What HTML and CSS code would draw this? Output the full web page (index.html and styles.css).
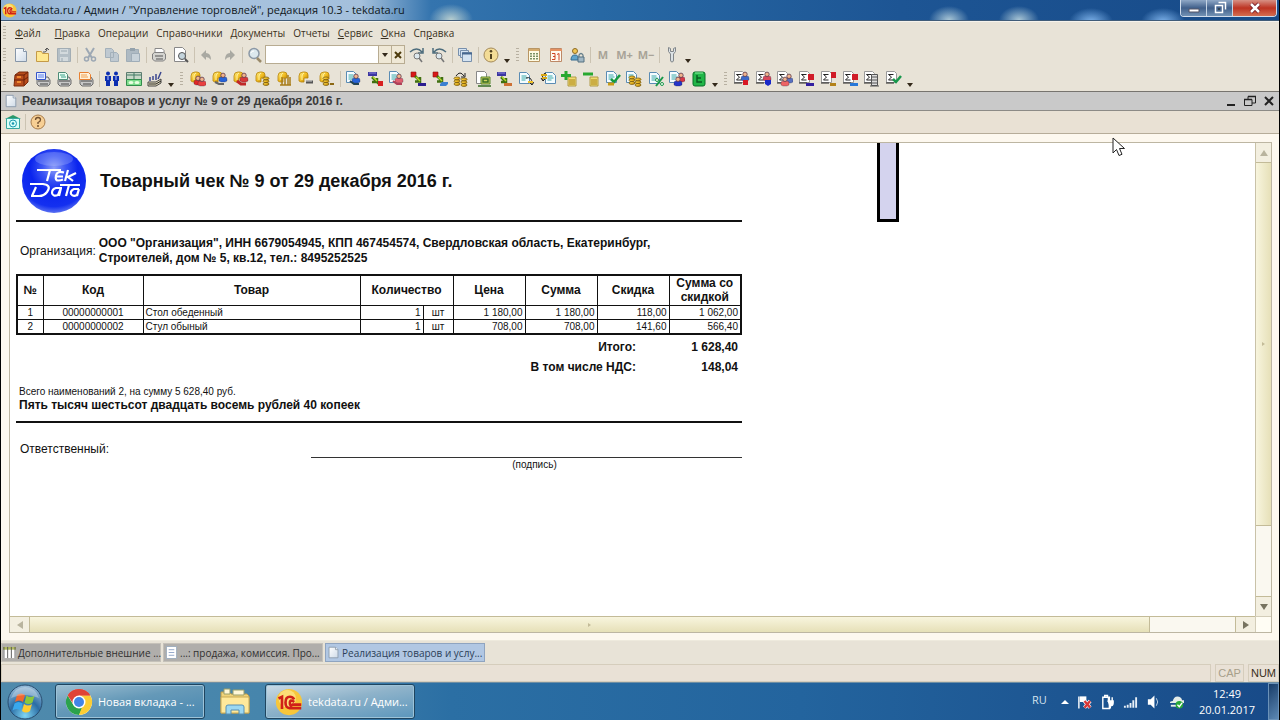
FILE: index.html
```html
<!DOCTYPE html>
<html lang="ru">
<head>
<meta charset="utf-8">
<title>Реализация товаров и услуг № 9</title>
<link rel="stylesheet" href="styles.css">
</head>
<body>
<svg class="sprite" aria-hidden="true">
  <defs>
    <linearGradient id="gold" x2="1" y2="1"><stop offset="0" stop-color="#fff08a"/><stop offset=".5" stop-color="#f2bd22"/><stop offset="1" stop-color="#a87408"/></linearGradient>
    <linearGradient id="paper" x2="1" y2="1"><stop offset="0" stop-color="#fff"/><stop offset="1" stop-color="#cfdbe8"/></linearGradient>
    <radialGradient id="ball" cx=".5" cy=".3" r=".75"><stop offset="0" stop-color="#8c9cf8"/><stop offset=".25" stop-color="#3a54f4"/><stop offset=".5" stop-color="#0a24ee"/><stop offset=".8" stop-color="#1430f0"/><stop offset="1" stop-color="#7e92f2"/></radialGradient>
    <radialGradient id="orb" cx=".5" cy=".9" r=".9"><stop offset="0" stop-color="#7fd6f4"/><stop offset=".5" stop-color="#2a6ca4"/><stop offset="1" stop-color="#9cc0dc"/></radialGradient>
    <g id="man"><path d="M0 8V6q0-2 2-2h4q2 0 2 2v2L6 9H2z" fill="currentColor" stroke="#223" stroke-opacity=".45" stroke-width=".6"/><circle cx="4" cy="2.3" r="2.2" fill="#f2b48c" stroke="#5a3a50" stroke-width=".8"/></g>
    <g id="coins"><g fill="url(#gold)" stroke="#7a5a08" stroke-width=".8"><ellipse cx="4" cy="8" rx="3" ry="1.400"/><ellipse cx="4" cy="5.2" rx="3" ry="1.400"/><ellipse cx="4" cy="2.4" rx="3" ry="1.400"/></g></g>
    <g id="page"><path d="M.5.5h7l3 3v8h-10z" fill="#f5fcff" stroke="#5a8cb4"/><path d="M2.500 4h5M2.500 6h6M2.500 8h4" stroke="#38a8a8"/></g>
    <g id="purse"><path d="M1 10V5q0-4 4-4h2q3 0 3 3v3H6v4H3z" fill="url(#gold)" stroke="#b88408" stroke-width=".8"/><path d="M4 9V5q0-2 2-3" fill="none" stroke="#fff5a8"/></g>
    <g id="printer"><path d="M2 9l2-3h9l2 3v4l-2 2H4l-2-2z" fill="#c8c8c8" stroke="#6c6c6c"/><path d="M3 10h11M5 13h8" stroke="#444"/><path d="M4 8h9" stroke="#fff"/></g>
    <g id="sum"><path d="M.5.5h8l2 2v9H.5z" fill="#fff" stroke="#999"/><path d="M7.500 3.500H2.500l3 2.500-3 3h5M0 12h8" fill="none" stroke="#222"/></g>
    <g id="flow"><path d="M1 1h9v4H1z" fill="#3c36a0"/><path d="M2 2h7" stroke="#8a86e0"/><path d="M5 6l5 5V7M10 11H5" fill="none" stroke="#407010" stroke-width="2.500"/><path d="M6 6l4 4" stroke="#b4dc28" stroke-width="1.500"/></g>
    <g id="route"><path d="M1 1h5v5H1z" fill="#d81818" stroke="#901010" stroke-width=".6"/><path d="M5 5l5 5V6M10 10.500H5" stroke="#407010" stroke-width="2.500" fill="none"/><path d="M6 6l4 4" stroke="#b4dc28" stroke-width="1.500"/></g>
  </defs>
  <symbol id="one" viewBox="0 0 16 16"><circle cx="8" cy="8" r="7.500" fill="#f7c63a"/><circle cx="7" cy="6" r="5" fill="#fff0a0" opacity=".6"/><path d="M2 6l2-1v7M11 6.500q-1-1.500-2.500-1.500Q6 5 6 8.300T8.500 11.500H15M11 8q-2.500-2-2.500.500T10 9.500h5" fill="none" stroke="#d02018" stroke-width="1.500"/></symbol>
  <symbol id="new" viewBox="0 0 16 16"><path d="M2.500 1.500h8l3 3v10h-11z" fill="url(#paper)" stroke="#8696a8"/><path d="M10.500 1.500v3h3" fill="#fff" stroke="#8696a8"/></symbol>
  <symbol id="open" viewBox="0 0 16 16"><path d="M1.500 4.500h5l1 2h6v8h-12z" fill="#ffe890" stroke="#c49a48"/><path d="M8 5h2q2 0 2-4M10 3l2-2 2 2" fill="none" stroke="#555"/></symbol>
  <symbol id="save" viewBox="0 0 16 16"><path d="M1.500 1.500h13v13h-13z" fill="#b4bfc6" stroke="#a2adb4"/><path d="M4 2h8v5H4zM4 10h8v4H4z" fill="#d3dadd"/><path d="M5 4h6M6 11v3" stroke="#9aa8b0"/></symbol>
  <symbol id="cut" viewBox="0 0 16 16"><path d="M4 1l6 10M12 1L6 11" stroke="#9da8b4" stroke-width="2"/><circle cx="4.500" cy="12" r="2" fill="none" stroke="#9da8b4" stroke-width="1.500"/><circle cx="11.500" cy="12" r="2" fill="none" stroke="#9da8b4" stroke-width="1.500"/></symbol>
  <symbol id="copy" viewBox="0 0 16 16"><path d="M1.500 1.500h6l2 2v7h-8zM6.500 5.500h6l2 2v7h-8z" fill="#bfc9d1" stroke="#a3b0ba"/></symbol>
  <symbol id="paste" viewBox="0 0 16 16"><path d="M1.500 2.500h12v12h-12z" fill="#aebac3" stroke="#a0adb6"/><path d="M5 1h5v3H5z" fill="#94a2ac"/><path d="M6.500 6.500h8v8h-8z" fill="#c8d2d9" stroke="#9fadb8"/></symbol>
  <symbol id="print" viewBox="0 0 16 16"><path d="M4 7V1.500h7l2 2V7" fill="#fff" stroke="#888"/><path d="M1.500 7l2-1.500h9l2 1.500v5l-2 2h-9l-2-2z" fill="#d4d4d0" stroke="#808080"/><path d="M4 9h8M5 12h7" stroke="#555"/></symbol>
  <symbol id="preview" viewBox="0 0 16 16"><path d="M1.500.500h8l3 3v11h-11z" fill="#fff" stroke="#888"/><circle cx="9" cy="9" r="3.500" fill="#c4d4dc" stroke="#555"/><path d="M12 12l3 3" stroke="#555" stroke-width="2"/></symbol>
  <symbol id="undo" viewBox="0 0 16 16"><path d="M7 3v3q5 0 5 7-2-3-5-3v3L2 8z" fill="#a9a9a2"/></symbol>
  <symbol id="redo" viewBox="0 0 16 16"><path d="M9 3v3q-5 0-5 7 2-3 5-3v3l5-5z" fill="#a9a9a2"/></symbol>
  <symbol id="find" viewBox="0 0 16 16"><circle cx="7" cy="6.500" r="5" fill="#dce8ee" stroke="#8b98a6" stroke-width="1.500"/><path d="M10 11l4 4" stroke="#9a8a6a" stroke-width="2.500"/><path d="M4 6q0-2 3-2" stroke="#fff" fill="none"/></symbol>
  <symbol id="findnext" viewBox="0 0 16 16"><path d="M1 5q7-6 12 0M14 1v5H9" fill="none" stroke="#4c6c7c" stroke-width="1.500"/><circle cx="8" cy="9" r="3" fill="#dce8ee" stroke="#777"/><path d="M10 11l3 4" stroke="#777" stroke-width="1.500"/></symbol>
  <symbol id="findprev" viewBox="0 0 16 16"><path d="M15 5q-7-6-12 0M2 1v5h5" fill="none" stroke="#4c6c7c" stroke-width="1.500"/><circle cx="8" cy="9" r="3" fill="#dce8ee" stroke="#777"/><path d="M10 11l3 4" stroke="#777" stroke-width="1.500"/></symbol>
  <symbol id="windows" viewBox="0 0 16 16"><g fill="#d5e4f2" stroke="#7890ac"><path d="M1.500 1.500h8v7h-8z"/><path d="M3.500 3.500h8v7h-8z"/><path d="M5.500 5.500h9v9h-9z"/></g><path d="M5 6.500h10" stroke="#466890" stroke-width="2"/></symbol>
  <symbol id="info" viewBox="0 0 16 16"><circle cx="8" cy="8" r="7" fill="#f3dc96" stroke="#a48a5a"/><path d="M8 7v5" stroke="#50411f" stroke-width="2"/><circle cx="8" cy="4.300" r="1.300" fill="#50411f"/></symbol>
  <symbol id="calc" viewBox="0 0 16 16"><path d="M2.500 1.500h11v13h-11z" fill="#fffbe4" stroke="#b89664"/><path d="M3 3h10" stroke="#d4aa6c" stroke-width="2"/><path d="M5 6v7M8 6v7M11 6v7" stroke="#50703c" stroke-width="1.500" stroke-dasharray="1.500 1"/></symbol>
  <symbol id="calendar" viewBox="0 0 16 16"><path d="M2.500 1.500h11v13h-11z" fill="#fffaf0" stroke="#bd8866"/><path d="M2 3h12" stroke="#e59162" stroke-width="2"/><path d="M4 6.500h3v6H4M5 9.500h2M9 7.500l2-1v7" fill="none" stroke="#cf4524"/></symbol>
  <symbol id="userlock" viewBox="0 0 16 16"><circle cx="6" cy="4" r="2.500" fill="#f1c653" stroke="#8c6a25"/><path d="M2 13q0-5 4-5t3 5z" fill="#62a5cc" stroke="#326b90"/><path d="M10 10V8q2-3 4 0v2" fill="none" stroke="#68808c" stroke-width="1.300"/><path d="M9 10h6v5H9z" fill="#a1b7c4" stroke="#547080"/></symbol>
  <symbol id="wrench" viewBox="0 0 16 16"><path d="M4.500.500v4l2 2.500v6q0 2 1.500 2t1.500-2V7l2-2.500v-4l-2 1v3h-3v-3z" fill="#dce2e5" stroke="#81868a"/></symbol>
  <symbol id="books" viewBox="0 0 16 16"><path d="M2 4l4-3h9v10l-4 4H1z" fill="#b84c1c" stroke="#7b2a0b"/><path d="M2 4h9M1 9h10M11 4v10M11 9l4-3M11 4l4-3" stroke="#6b2008"/><path d="M4 6h4M4 11h4" stroke="#ef8a32" stroke-width="2"/></symbol>
  <symbol id="pr1" viewBox="0 0 16 16"><use href="#printer"/><path d="M1.500 1.500h9v7h-9z" fill="#e8eeff" stroke="#3654c8"/><path d="M3 4h6M3 6h6" stroke="#5c80e8"/></symbol>
  <symbol id="pr2" viewBox="0 0 16 16"><use href="#printer"/><path d="M2.500 1.500h7l2 2v5h-9z" fill="#eafff4" stroke="#4e8c78"/><path d="M4 4h5M5 6h5" stroke="#3ca088"/></symbol>
  <symbol id="pr3" viewBox="0 0 16 16"><use href="#printer"/><path d="M1.500 1.500h9l2 2v5h-11z" fill="#fff0d8" stroke="#e88030"/><path d="M3 4h6M3 6h7" stroke="#f0a050"/></symbol>
  <symbol id="pair" viewBox="0 0 16 16"><g fill="#0c2eb0"><circle cx="4" cy="2.500" r="2"/><circle cx="12" cy="2.500" r="2"/><path d="M1 5h6v5H6v5H2v-5H1zM9 5h6v5h-1v5h-4v-5H9z"/></g><path d="M4 5v4M12 5v4" stroke="#b9c6ff"/></symbol>
  <symbol id="cash" viewBox="0 0 16 16"><path d="M.500 1.500h15v7H.500z" fill="#c8d8c8" stroke="#5c7c70"/><path d="M1 4h14M8 2v7" stroke="#437b65"/><path d="M.500 8.500h15v6H.500z" fill="#7cdc8c" stroke="#328c4c"/><ellipse cx="5" cy="11.500" rx="2.500" ry="1.500" fill="#e8ffe0"/><ellipse cx="11" cy="11.500" rx="2.500" ry="1.500" fill="#e8ffe0"/></symbol>
  <symbol id="chartpen" viewBox="0 0 16 16"><path d="M1 11h8l5-3v4l-5 3H1z" fill="#e8e0c0" stroke="#444"/><path d="M3 10V6M6 9V5M9 9V3M11 8l3-7" stroke="#3c4890" stroke-width="1.500"/><path d="M2 13h7l5-3" fill="none" stroke="#222"/></symbol>
  <symbol id="g1" viewBox="0 0 16 16"><use href="#purse"/><use href="#man" x="4" y="5" color="#e02828"/><use href="#man" x="8" y="6" color="#e84040"/></symbol>
  <symbol id="g2" viewBox="0 0 16 16"><use href="#purse"/><use href="#man" x="7" y="2" color="#2864d8"/><path d="M3 11l4 2h5" fill="none" stroke="#666" stroke-width="2"/></symbol>
  <symbol id="g3" viewBox="0 0 16 16"><use href="#purse"/><use href="#man" x="7" y="2" color="#d83838"/><path d="M4 10l4 3h5" fill="none" stroke="#c02828" stroke-width="3"/></symbol>
  <symbol id="g4" viewBox="0 0 16 16"><use href="#purse"/><use href="#coins" x="7" y="5"/></symbol>
  <symbol id="g5" viewBox="0 0 16 16"><use href="#purse" x="1"/><path d="M6 14V6M9 14V7M12 14V4M14 14V6M4 14h11" stroke="#a87c18" stroke-width="1.500"/></symbol>
  <symbol id="g6" viewBox="0 0 16 16"><use href="#purse"/><path d="M8 11h7" stroke="#555" stroke-width="3"/><path d="M8 10h6" stroke="#ccc"/></symbol>
  <symbol id="g7" viewBox="0 0 16 16"><use href="#purse"/><use href="#coins" x="3" y="5"/><path d="M11 13h4" stroke="#8c6814" stroke-width="2"/></symbol>
  <symbol id="d1" viewBox="0 0 16 16"><use href="#page" x="1"/><use href="#man" x="7" y="3" color="#2864d8"/><path d="M5 10l4 3h5" fill="none" stroke="#245" stroke-width="2"/></symbol>
  <symbol id="d2" viewBox="0 0 16 16"><use href="#flow"/><path d="M11 10h5v5h-5z" fill="#d82020"/></symbol>
  <symbol id="d3" viewBox="0 0 16 16"><use href="#page" x="1"/><use href="#man" x="7" y="3" color="#e06070"/><path d="M5 10l4 3h5" fill="none" stroke="#b04058" stroke-width="2"/></symbol>
  <symbol id="d4" viewBox="0 0 16 16"><use href="#route"/><path d="M8 12h8v3H8z" fill="#2c1e90"/></symbol>
  <symbol id="d5" viewBox="0 0 16 16"><use href="#route"/><path d="M8 13l2-2h6v2l-2 2H8z" fill="#3c80d0"/></symbol>
  <symbol id="d6" viewBox="0 0 16 16"><use href="#coins" y="5"/><use href="#coins" x="7" y="6"/><path d="M3 5q4-6 8 0M12 2v4H8" fill="none" stroke="#222"/></symbol>
  <symbol id="d7" viewBox="0 0 16 16"><path d="M1.500.500h8l2 2v10h-10z" fill="#fff" stroke="#888"/><path d="M6 6h9v7H6z" fill="#d4d460" stroke="#55842c"/><path d="M8 8h5v3H8zM3 15h13" fill="none" stroke="#346c24" stroke-width="1.500"/></symbol>
  <symbol id="d8" viewBox="0 0 16 16"><use href="#flow"/><path d="M8 12h8v3H8z" fill="#ce7134"/></symbol>
  <symbol id="d9" viewBox="0 0 16 16"><use href="#page" x="1" y="1"/><path d="M8 7q6-2 6 6M11 11l3 3 2-3" fill="none" stroke="#222"/><path d="M10 10h5v2h-5z" fill="#f0c028"/></symbol>
  <symbol id="d10" viewBox="0 0 16 16"><use href="#page" x="5" y="1"/><path d="M6 2Q1 3 3 9M1 7l2 3 3-3" fill="none" stroke="#222"/><path d="M1 4h6M2 7h5" stroke="#d8a818" stroke-width="2"/></symbol>
  <symbol id="d11" viewBox="0 0 16 16"><path d="M7 6h8v9H7z" fill="#f0dc70" stroke="#b09a48"/><path d="M8 9h6M8 11h6M8 13h6" stroke="#a88018"/><path d="M5 0v9M0 4.500h10" stroke="#28a830" stroke-width="3"/></symbol>
  <symbol id="d12" viewBox="0 0 16 16"><path d="M7 6h8v9H7z" fill="#f0dc70" stroke="#b09a48"/><path d="M8 9h6M8 11h6M8 13h6" stroke="#a88018"/><path d="M0 3h10" stroke="#28a830" stroke-width="3"/></symbol>
  <symbol id="d13" viewBox="0 0 16 16"><use href="#page" x="1"/><path d="M6 8l3 3 6-7" fill="none" stroke="#159a40" stroke-width="2.500"/><path d="M3 13h6" stroke="#c89c14" stroke-width="3"/></symbol>
  <symbol id="d14" viewBox="0 0 16 16"><use href="#page"/><use href="#coins" x="2" y="4"/><use href="#coins" x="8" y="6"/></symbol>
  <symbol id="d15" viewBox="0 0 16 16"><use href="#page" x="1" y="1"/><path d="M8 15l7-9" stroke="#189848" stroke-width="2"/><circle cx="9" cy="9" r="1.500" fill="#fff" stroke="#189848"/><circle cx="14" cy="13" r="1.500" fill="#fff" stroke="#189848"/></symbol>
  <symbol id="d16" viewBox="0 0 16 16"><use href="#page"/><use href="#man" x="8" y="2" color="#d83848"/><use href="#man" x="5" y="6" color="#2434c8"/></symbol>
  <symbol id="d17" viewBox="0 0 16 16"><rect x="2" y="1" width="12" height="14" rx="2" fill="#22b648" stroke="#087028"/><path d="M6 4v7h5M6 7h4" fill="none" stroke="#085c20" stroke-width="1.500"/><path d="M4 2h8" stroke="#8cf0a0"/></symbol>
  <symbol id="s1" viewBox="0 0 16 16"><use href="#sum"/><use href="#man" x="7" y="1" color="#3c68c8"/><path d="M9 9h5v5H9z" fill="#d81824"/></symbol>
  <symbol id="s2" viewBox="0 0 16 16"><use href="#sum"/><use href="#man" x="7" y="1" color="#d8485c"/><path d="M9 9h6v4l-3 2-3-2z" fill="#1828c8"/></symbol>
  <symbol id="s3" viewBox="0 0 16 16"><use href="#sum"/><use href="#man" x="8" y="3" color="#5870c0"/><use href="#man" x="4" y="6" color="#ee6464"/></symbol>
  <symbol id="s4" viewBox="0 0 16 16"><use href="#sum"/><path d="M9 3h6v6H9z" fill="#d01c28"/><path d="M7 12h8v3H7z" fill="#3420a0"/></symbol>
  <symbol id="s5" viewBox="0 0 16 16"><use href="#sum"/><path d="M10 1h5v6h-5z" fill="#d01c28"/><path d="M9 12h6v3H9z" fill="#b48218"/></symbol>
  <symbol id="s6" viewBox="0 0 16 16"><use href="#sum"/><path d="M9 3h6v6H9z" fill="#d01c28"/><path d="M7 12h8v3H7z" fill="#2878d8"/></symbol>
  <symbol id="s7" viewBox="0 0 16 16"><use href="#sum"/><path d="M7.500 3.500h6v11h-6z" fill="#ddd" stroke="#555"/><path d="M8 6h5M8 9h5M8 12h5M6 15h9" stroke="#555"/></symbol>
  <symbol id="s8" viewBox="0 0 16 16"><use href="#sum"/><path d="M7 8l3 3 5-6" fill="none" stroke="#18984c" stroke-width="2.500"/></symbol>
  <symbol id="mail" viewBox="0 0 16 16"><path d="M0 5l8-4 8 4z" fill="#2a9868"/><path d="M1.500 4.500h13v10h-13z" fill="#d8fff8" stroke="#38a8a0"/><circle cx="8" cy="9.500" r="3.500" fill="none" stroke="#1898b0"/><circle cx="8" cy="9.500" r="1.300" fill="#1898b0"/></symbol>
  <symbol id="help" viewBox="0 0 16 16"><circle cx="8" cy="8" r="7" fill="#f7cf94" stroke="#a97d4c"/><path d="M5.500 6q0-2.500 2.500-2.500t2.500 2.300Q10.500 7.500 8 8.500v1.500" fill="none" stroke="#725030" stroke-width="1.300"/><circle cx="8" cy="12" r="1" fill="#725030"/></symbol>
  <symbol id="list" viewBox="0 0 14 14"><path d="M0 1h14v12H0z" fill="#fff"/><path d="M0 2.500h14" stroke="#b0b860" stroke-width="3"/><path d="M1 1v12M5 1v12M9 1v12M13 1v12" stroke="#555"/></symbol>
  <symbol id="journal" viewBox="0 0 14 14"><path d="M1.500.500h11v13h-11z" fill="#fff" stroke="#9ab"/><path d="M4 4h6M4 7h6M4 10h6" stroke="#8fa4c8"/></symbol>
</svg>

<main class="app">
  <header class="titlebar">
    <svg class="app-icon"><use href="#one"/></svg>
    <span class="app-name">tekdata.ru / Админ / "Управление торговлей", редакция 10.3 - tekdata.ru</span>
    <div class="win-buttons">
      <button aria-label="Свернуть"><svg viewBox="0 0 14 14"><path d="M2 8h10v3H2z" fill="#fff" stroke="#556"/></svg></button>
      <button aria-label="Восстановить"><svg viewBox="0 0 14 14"><path d="M5.500 1.500h7v7M2.500 4.500h7v7h-7z" fill="none" stroke="#fff" stroke-width="1.500"/><path d="M5 7h2v2H5z" fill="#345"/></svg></button>
      <button class="close" aria-label="Закрыть"><svg viewBox="0 0 14 14"><path d="M3 3l8 8M11 3l-8 8" stroke="#612" stroke-width="4"/><path d="M3 3l8 8M11 3l-8 8" stroke="#fff" stroke-width="2.500"/></svg></button>
    </div>
  </header>

  <nav class="menu">
    <i class="grip"></i>
    <button><u>Ф</u>айл</button><button><u>П</u>равка</button><button>Операции</button><button>Справочники</button><button>Документы</button><button>Отчеты</button><button><u>С</u>ервис</button><button><u>О</u>кна</button><button>Сп<u>р</u>авка</button>
  </nav>

  <div class="toolbar">
    <i class="grip"></i>
    <div class="group w3"><button><svg><use href="#new"/></svg></button><button><svg><use href="#open"/></svg></button><button><svg><use href="#save"/></svg></button></div>
    <i class="sep"></i>
    <div class="group w3"><button><svg><use href="#cut"/></svg></button><button><svg><use href="#copy"/></svg></button><button><svg><use href="#paste"/></svg></button></div>
    <i class="sep"></i>
    <div class="group w2"><button><svg><use href="#print"/></svg></button><button><svg><use href="#preview"/></svg></button></div>
    <i class="sep"></i>
    <div class="group w2"><button><svg><use href="#undo"/></svg></button><button><svg><use href="#redo"/></svg></button></div>
    <i class="sep"></i>
    <button><svg><use href="#find"/></svg></button>
    <div class="search"><input type="text" aria-label="Поиск"><button aria-label="Список"><b class="tri"></b></button><button aria-label="Очистить"><svg viewBox="0 0 10 10"><path d="M2 2l6 6M8 2L2 8" stroke="#4c3a0c" stroke-width="2"/></svg></button></div>
    <div class="group w2"><button><svg><use href="#findnext"/></svg></button><button><svg><use href="#findprev"/></svg></button></div>
    <i class="sep"></i>
    <button><svg><use href="#windows"/></svg></button>
    <i class="sep"></i>
    <button><svg><use href="#info"/></svg></button>
    <button class="more" aria-label="Ещё"><b class="tri"></b></button>
    <i class="grip inner"></i>
    <div class="group w3"><button><svg><use href="#calc"/></svg></button><button><svg><use href="#calendar"/></svg></button><button><svg><use href="#userlock"/></svg></button></div>
    <i class="sep"></i>
    <div class="group w3 memory"><button>M</button><button>M+</button><button>M−</button></div>
    <i class="sep"></i>
    <button><svg><use href="#wrench"/></svg></button>
    <button class="more" aria-label="Ещё"><b class="tri"></b></button>
  </div>

  <div class="toolbar last">
    <i class="grip"></i>
    <div class="group w4"><button><svg><use href="#books"/></svg></button><button><svg><use href="#pr1"/></svg></button><button><svg><use href="#pr2"/></svg></button><button><svg><use href="#pr3"/></svg></button></div>
    <i class="sep"></i>
    <div class="group w3"><button><svg><use href="#pair"/></svg></button><button><svg><use href="#cash"/></svg></button><button><svg><use href="#chartpen"/></svg></button></div>
    <button class="more" aria-label="Ещё"><b class="tri"></b></button>
    <i class="grip inner"></i>
    <div class="group w7"><button><svg><use href="#g1"/></svg></button><button><svg><use href="#g2"/></svg></button><button><svg><use href="#g3"/></svg></button><button><svg><use href="#g4"/></svg></button><button><svg><use href="#g5"/></svg></button><button><svg><use href="#g6"/></svg></button><button><svg><use href="#g7"/></svg></button></div>
    <i class="sep"></i>
    <div class="group w17"><button><svg><use href="#d1"/></svg></button><button><svg><use href="#d2"/></svg></button><button><svg><use href="#d3"/></svg></button><button><svg><use href="#d4"/></svg></button><button><svg><use href="#d5"/></svg></button><button><svg><use href="#d6"/></svg></button><button><svg><use href="#d7"/></svg></button><button><svg><use href="#d8"/></svg></button><button><svg><use href="#d9"/></svg></button><button><svg><use href="#d10"/></svg></button><button><svg><use href="#d11"/></svg></button><button><svg><use href="#d12"/></svg></button><button><svg><use href="#d13"/></svg></button><button><svg><use href="#d14"/></svg></button><button><svg><use href="#d15"/></svg></button><button><svg><use href="#d16"/></svg></button><button><svg><use href="#d17"/></svg></button></div>
    <button class="more" aria-label="Ещё"><b class="tri"></b></button>
    <i class="grip inner"></i>
    <div class="group w8"><button><svg><use href="#s1"/></svg></button><button><svg><use href="#s2"/></svg></button><button><svg><use href="#s3"/></svg></button><button><svg><use href="#s4"/></svg></button><button><svg><use href="#s5"/></svg></button><button><svg><use href="#s6"/></svg></button><button><svg><use href="#s7"/></svg></button><button><svg><use href="#s8"/></svg></button></div>
    <button class="more" aria-label="Ещё"><b class="tri"></b></button>
  </div>

  <div class="doc-title">
    <svg class="doc-icon"><use href="#new"/></svg>
    <h1>Реализация товаров и услуг № 9 от 29 декабря 2016 г.</h1>
    <div class="doc-buttons">
      <button aria-label="Свернуть"><svg viewBox="0 0 12 12"><path d="M2 10h8" stroke="#222" stroke-width="2"/></svg></button>
      <button aria-label="Восстановить"><svg viewBox="0 0 12 12"><path d="M4 4V1.500h7.500V8H8M.500 4.500H8v6H.500z" fill="none" stroke="#222"/><path d="M4 1.500h8M0 4.500h8" stroke="#222" stroke-width="1.500"/></svg></button>
      <button aria-label="Закрыть"><svg viewBox="0 0 12 12"><path d="M2 2l8 8M10 2l-8 8" stroke="#222" stroke-width="2"/></svg></button>
    </div>
  </div>
  <div class="commands"><button aria-label="Отправить"><svg><use href="#mail"/></svg></button><i class="sep"></i><button aria-label="Справка"><svg><use href="#help"/></svg></button></div>

  <section class="work">
    <div class="viewer">
      <div class="sheet">
        <article class="receipt">
          <header class="receipt-head">
            <svg class="logo" viewBox="0 0 66 66" role="img" aria-label="TekData">
              <circle cx="33" cy="33" r="32" fill="url(#ball)"/>
              <ellipse cx="33" cy="11" rx="19" ry="7" fill="#cdd6ff" opacity=".25"/>
              <g fill="none" stroke="#fff" stroke-width="2.200">
                <path d="M16 22h24M29 22l-3 11M43 24.500q-7-2-8 3t2 5q3 0 5-1M35 28.500h7M47 22l-3 11M55 25l-8 4 5 4"/>
                <path d="M9 36h13q9 1 4 8-3 4-8 4h-8M15 39l-4 9M41 40h-6q-4 1-4 5 1 4 6 2l3-7-2 8M39 37h20M48 37l-3 11M58 41h-5q-4 2-3 5 2 3 6 1l2-6-2 7"/>
              </g>
            </svg>
            <h2>Товарный чек № 9 от 29 декабря 2016 г.</h2>
          </header>
          <div class="org"><span>Организация:</span><strong>ООО "Организация", ИНН 6679054945, КПП 467454574, Свердловская область, Екатеринбург,<br>Строителей, дом № 5, кв.12, тел.: 8495252525</strong></div>
          <table>
            <colgroup><col class="c-num"><col class="c-code"><col class="c-name"><col class="c-qty"><col class="c-unit"><col class="c-sum"><col class="c-sum"><col class="c-sum"><col class="c-sum"></colgroup>
            <thead><tr><th>№</th><th>Код</th><th>Товар</th><th colspan="2">Количество</th><th>Цена</th><th>Сумма</th><th>Скидка</th><th>Сумма со скидкой</th></tr></thead>
            <tbody>
              <tr><td class="mid">1</td><td class="mid">00000000001</td><td class="name">Стол обеденный</td><td>1</td><td class="mid">шт</td><td>1 180,00</td><td>1 180,00</td><td>118,00</td><td>1 062,00</td></tr>
              <tr><td class="mid">2</td><td class="mid">00000000002</td><td class="name">Стул обыный</td><td>1</td><td class="mid">шт</td><td>708,00</td><td>708,00</td><td>141,60</td><td>566,40</td></tr>
            </tbody>
          </table>
          <div class="totals"><span>Итого:</span><span>1 628,40</span><span>В том числе НДС:</span><span>148,04</span></div>
          <div class="words"><p>Всего наименований 2, на сумму 5 628,40 руб.</p><strong>Пять тысяч шестьсот двадцать восемь рублей 40 копеек</strong></div>
          <div class="sign"><span>Ответственный:</span><small>(подпись)</small></div>
        </article>
        <div class="frame"></div>
      </div>
      <div class="vscroll"><button aria-label="Вверх"><b class="arr up"></b></button><div class="vthumb"><b class="arr right faint"></b></div><div class="vtrack"></div><button aria-label="Вниз"><b class="arr down"></b></button></div>
      <div class="hscroll"><button aria-label="Влево"><b class="arr left"></b></button><div class="hthumb"><b class="arr right faint"></b></div><div class="htrack"></div><button aria-label="Вправо"><b class="arr right"></b></button></div>
      <div class="corner"></div>
    </div>
  </section>

  <nav class="tabs">
    <button><svg><use href="#list"/></svg>Дополнительные внешние ...</button>
    <button><svg><use href="#journal"/></svg>...: продажа, комиссия. Про...</button>
    <button class="active"><svg><use href="#new"/></svg>Реализация товаров и услу...</button>
  </nav>
  <footer class="status"><span class="hint"></span><span class="cap">CAP</span><span>NUM</span></footer>
</main>

<footer class="taskbar">
  <button class="start" aria-label="Пуск"><svg viewBox="0 0 36 36"><circle cx="18" cy="18" r="17" fill="url(#orb)" stroke="#274c70"/><path d="M10 11q4-3 8 0l-2 7q-4-3-8 0z" fill="#f06830"/><path d="M19.500 11.500q4 3 8 0l-2 7q-4 3-8 0z" fill="#8cc83c"/><path d="M7.500 19.500q4-3 8 0l-2 7q-4-3-8 0z" fill="#38a8ee"/><path d="M17 20q4 3 8 0l-2 7q-4 3-8 0z" fill="#ffcc30"/><path d="M4 14Q8 3 18 3t14 11Q18 8 4 14z" fill="#fff" opacity=".3"/></svg></button>
  <button class="task"><svg viewBox="0 0 28 28"><circle cx="14" cy="14" r="13" fill="#fff"/><path d="M14 14L2.700 7.500A13 13 0 0 1 25.300 7.500H14z" fill="#e04438"/><path d="M14 14L9 18 2.700 7.500A13 13 0 0 0 14 27l5-10z" fill="#2ba24c"/><path d="M14 14h5l-5 13A13 13 0 0 0 25.300 7.500H14z" fill="#fbcd34"/><path d="M2.700 7.500A13 13 0 0 1 25.300 7.500H14q-6 0-6 8z" fill="#e04438"/><circle cx="14" cy="14" r="6.500" fill="#fff"/><circle cx="14" cy="14" r="5" fill="#4285e8"/></svg>Новая вкладка - ...</button>
  <button class="pinned" aria-label="Проводник"><svg viewBox="0 0 30 30"><path d="M1 5h8l2 2h16l2 2v17H1z" fill="#efd37a" stroke="#ba9a4a"/><path d="M4 2h6v5H4zM13 3h11v5H13z" fill="#fff8d8" stroke="#9a9e68"/><path d="M1 10h28v16H1z" fill="#ffe99b" stroke="#c7a955"/><path d="M6 27v-7q0-2 2-2h14q2 0 2 2v7h-5v-4h-8v4z" fill="#9bd8f2" stroke="#568fb4"/></svg></button>
  <button class="task active"><svg><use href="#one"/></svg>tekdata.ru / Адми...</button>
  <div class="tray">
    <span class="lang">RU</span>
    <b class="arr up white"></b>
    <svg viewBox="0 0 16 16"><path d="M2 2v13" stroke="#fff" stroke-width="1.500"/><path d="M3 2h7v6H3z" fill="#fff"/><path d="M8 7l6 7M14 7l-6 7" stroke="#fff" stroke-width="4"/><path d="M8 7l6 7M14 7l-6 7" stroke="#d83838" stroke-width="2.500"/></svg>
    <svg viewBox="0 0 16 16"><path d="M3 3h7v12H3zM5 1h3v2H5z" fill="none" stroke="#fff" stroke-width="1.500"/><path d="M9 3v4M13 3v4M8 7h6v2q0 3-3 3v3" fill="#fff" stroke="#fff" stroke-width="1.500"/></svg>
    <svg viewBox="0 0 16 16"><path d="M2 14v-2M5 14v-3M8 14V9M11 14V6M14 14V3" stroke="#e8f0f8" stroke-width="2"/></svg>
    <svg viewBox="0 0 16 16"><path d="M2 5h3l4-4v14l-4-4H2z" fill="#fff"/><path d="M11 4q3 4 0 8" fill="none" stroke="#c8d8e8"/></svg>
    <svg viewBox="0 0 16 16"><path d="M1 9q0-2 3-2 1-5 5-5t5 4h2v3z" fill="#e4ece8"/><path d="M2 12h6" stroke="#e4ece8" stroke-width="2"/><circle cx="11" cy="11" r="4" fill="#28a838"/><path d="M9 11l2 2 3-4" fill="none" stroke="#fff" stroke-width="1.500"/></svg>
    <time>12:49<br>20.01.2017</time>
    <button class="peek" aria-label="Показать рабочий стол"></button>
  </div>
</footer>
<svg class="cursor" viewBox="0 0 14 20"><path d="M1 1v15l3.500-3.500L7 18.500l3-1.200-2.500-5.800h5z" fill="#fff" stroke="#222"/></svg>
</body>
</html>
```
FILE: styles.css
```css
* { box-sizing: border-box; }
body {
  margin: 0;
  height: 100vh;
  display: flex;
  flex-direction: column;
  overflow: hidden;
  font: 11px/14px "Open Sans", "Noto Sans", sans-serif;
  color: #3a3020;
  background: #000;
}
button { font: inherit; color: inherit; background: none; border: 0; padding: 0; margin: 0; }
button svg { display: block; }
.sprite { position: absolute; width: 0; height: 0; }
.app { flex: 1; min-height: 0; display: flex; flex-direction: column; margin: 0 1px; background: #e8e3d7; }

.titlebar {
  height: 21px;
  display: flex;
  align-items: center;
  gap: 4px;
  padding-left: 1px;
  color: #101820;
  border-bottom: 1px solid #405c78;
  background:
    radial-gradient(ellipse 22px 16px at 450px 20px, #b9cfd0, transparent),
    radial-gradient(ellipse 20px 14px at 948px 20px, #a9c6d6, transparent),
    radial-gradient(ellipse 20px 14px at 1018px 20px, #a9c6d6, transparent),
    radial-gradient(ellipse 22px 14px at 1090px 22px, #7fb4ec, transparent),
    radial-gradient(ellipse 22px 14px at 1162px 22px, #7fb4ec, transparent),
    linear-gradient(90deg, #8fb0d2, #a9c3de 120px, #a4c0dc 360px, #3474ae 430px, #2768a4 600px, #1d5594 900px, #174a88);
}
.app-icon { width: 15px; height: 15px; }
.win-buttons { margin-left: auto; margin-right: 2px; align-self: flex-start; display: flex; border: 1px solid #d0dceb; border-top: 0; border-radius: 0 0 4px 4px; overflow: hidden; }
.win-buttons button { width: 26px; height: 16px; display: grid; place-items: center; background: linear-gradient(#90a8c6, #405f8a 50%, #7392b4); border-right: 1px solid #c6d4e4; }
.win-buttons .close { width: 43px; border: 0; background: linear-gradient(#d79084, #bd3322 50%, #d46d50); }
.win-buttons svg { width: 14px; height: 14px; }

.grip { flex: none; width: 3px; height: 14px; margin: 0 5px 0 2px; background: repeating-linear-gradient(#b7b0a1 0 1px, transparent 1px 3px); }
.grip.inner { margin: 0 5px 0 3px; }
.sep { flex: none; width: 1px; height: 16px; margin: 0 2px; background: #cbc3b2; }
.menu { height: 22px; display: flex; align-items: center; gap: 8px; font-size: 10px; border-top: 1px solid #f6f3ec; }
.menu button { white-space: nowrap; }
.menu .grip { margin-right: 1px; }
.menu .grip + button { padding-right: 6px; }

.toolbar { height: 23px; display: flex; align-items: center; }
.toolbar.last { height: 26px; border-bottom: 1px solid #77746f; }
.toolbar > button, .group button { flex: none; width: 20px; height: 20px; display: grid; place-items: center; }
.toolbar svg, .commands svg { width: 16px; height: 16px; }
.group { display: flex; justify-content: space-between; }
.w2 { width: 42px; } .w3 { width: 63px; } .w4 { width: 85px; } .w7 { width: 149px; } .w8 { width: 172px; } .w17 { width: 366px; }
.group + .sep, .toolbar > button + .sep { margin-left: 3px; }
.toolbar > .more { width: 12px; align-items: end; padding-bottom: 2px; }
.tri { display: block; border: 3px solid transparent; border-top: 4px solid #33291a; border-bottom: 0; }
.memory button { color: #a8a398; font-weight: 700; }
.search { display: flex; width: 140px; height: 19px; border: 1px solid #b8ac92; margin: 0 2px 0 0; background: #fff; }
.search input { flex: 1; min-width: 0; border: 0; padding: 0 3px; font: inherit; }
.toolbar .search button { width: 13px; display: grid; place-items: center; border-left: 1px solid #b8ac92; background: #efe8d6; }
.toolbar .search svg { width: 10px; height: 10px; }

.doc-title { height: 19px; display: flex; align-items: center; gap: 4px; padding: 0 4px 0 3px; background: #c9c9c9; border-bottom: 1px solid #8c8a86; color: #3a3a3a; }
.doc-title h1 { margin: 0; font: bold 12px/14px "Liberation Sans", Arial, sans-serif; }
.doc-icon { width: 14px; height: 14px; }
.doc-buttons { margin-left: auto; display: flex; gap: 7px; }
.doc-buttons svg { width: 12px; height: 12px; }
.commands { height: 23px; display: flex; align-items: center; gap: 2px; padding-left: 4px; border-bottom: 1px solid #b6ac99; background: #e9e1d4; }

.work { flex: 1; min-height: 0; padding: 8px 7px 7px 8px; background: #fdf8ef; display: grid; }
.viewer { min-height: 0; display: grid; grid-template: minmax(0, 1fr) 16px / minmax(0, 1fr) 16px; border: 1px solid #bdb6a2; background: #fff; }
.sheet { display: flex; align-items: flex-start; padding-left: 6px; overflow: hidden; }
.receipt { width: 726px; flex: none; font: 11px/14px "Liberation Sans", Arial, sans-serif; color: #111; }
.frame { width: 22px; height: 79px; margin-left: 135px; border: 3px solid #000; border-top: 0; background: #d4d3ee; }
.receipt-head { height: 79px; display: flex; align-items: center; gap: 13px; padding: 0 0 1px 5px; border-bottom: 2px solid #111; }
.logo { width: 66px; height: 66px; }
.receipt-head h2 { margin: 0; font-size: 18px; line-height: 22px; }
.org { display: flex; align-items: center; gap: 3px; padding: 14px 0 8px 4px; font-size: 12px; line-height: 15px; }
table { width: 100%; border-collapse: collapse; table-layout: fixed; border: 2px solid #111; }
th, td { border: 1px solid #111; padding: 0 2px; }
th { height: 30px; font-size: 12px; line-height: 14px; }
td { height: 14px; font-size: 10px; line-height: 13px; text-align: right; }
td.mid { text-align: center; }
td.name { text-align: left; }
.c-num { width: 26px; } .c-code { width: 100px; } .c-name { width: 217px; } .c-qty { width: 63px; } .c-unit { width: 30px; } .c-sum { width: 72px; }
.totals { display: grid; grid-template-columns: 1fr 102px; row-gap: 5px; padding: 5px 4px 0 0; font-size: 12px; line-height: 15px; font-weight: 700; text-align: right; }
.words { padding: 10px 0 8px 3px; border-bottom: 2px solid #111; font-size: 12px; line-height: 15px; }
.words p { margin: 0; font-size: 10px; line-height: 13px; }
.sign { display: grid; grid-template-columns: 291px 1fr; padding: 18px 0 0 4px; font-size: 12px; line-height: 16px; }
.sign small { grid-column: 2; border-top: 1px solid #333; text-align: center; font-size: 10px; line-height: 14px; padding-left: 16px; }
.sign span { grid-column: 1 / -1; }

.vscroll { display: flex; flex-direction: column; border-left: 1px solid #c9c2a8; background: #faf8f0; }
.vscroll button { height: 19px; display: grid; place-items: center; background: #f3efe0; }
.vthumb { flex: 365; display: grid; place-items: center; border: solid #c3bb98; border-width: 1px 0; background: linear-gradient(90deg, #f8f5de, #e6e0b8); }
.vtrack { flex: 71; border-bottom: 1px solid #c3bb98; }
.hscroll { display: flex; border-top: 1px solid #c3bb98; background: #faf8f0; }
.hscroll button { width: 19px; display: grid; place-items: center; background: #f3efe0; }
.hthumb { flex: 1121; display: grid; place-items: center; border: solid #c3bb98; border-width: 0 1px; background: linear-gradient(#f8f5de, #e6e0b8); }
.htrack { flex: 85; border-right: 1px solid #c3bb98; }
.corner { border: 1px solid #d3cdb8; border-width: 1px 0 0 1px; background: #fffdf4; }
.arr { border: 4px solid transparent; width: 0; height: 0; }
.up { border-bottom: 6px solid #b9b49e; border-top: 0; }
.down { border-top: 6px solid #77735f; border-bottom: 0; }
.left { border-right: 6px solid #b9b49e; border-left: 0; }
.right { border-left: 6px solid #77735f; border-right: 0; }
.arr.faint { border-width: 2px 0 2px 3px; border-left-color: #c3bb98; }
.arr.white { border-bottom: 4px solid #fff; }

.tabs { height: 24px; display: flex; align-items: center; gap: 2px; border-top: 1px solid #eeeadd; background: #e8e3d7; font-size: 10px; }
.tabs button { width: 160px; height: 19px; display: flex; align-items: center; gap: 2px; padding: 0 1px; white-space: nowrap; color: #303030; background: #b0aeab; border: 1px solid #c5c1b9; }
.tabs svg { flex: none; width: 13px; height: 13px; }
.tabs .active { background: #b1c7e3; border-color: #8fa4c0; color: #2c4058; }
.status { height: 18px; display: flex; gap: 4px; background: #e9e1d6; font: 11px/16px "Liberation Sans", Arial, sans-serif; }
.status span { border: 1px solid #d5cdbc; padding: 0 2px; }
.status .hint { flex: 1; }
.status .cap { color: #a79f8b; }

.taskbar {
  height: 38px;
  display: flex;
  align-items: center;
  margin: 0 1px;
  padding-left: 6px;
  color: #fff;
  border-top: 1px solid #6e8ea4;
  background: linear-gradient(90deg, #4f8aac, #4685ac 260px, #2b6fa4 450px, #23649e 800px, #184a88);
}
.start svg { width: 36px; height: 36px; }
.task { width: 150px; height: 35px; display: flex; align-items: center; gap: 5px; margin-left: 12px; padding: 0 9px; white-space: nowrap; border: 1px solid #1f4560; border-radius: 3px; box-shadow: inset 0 0 0 1px #9dc3d8; background: linear-gradient(170deg, #9ebfd2, #6599b8 45%, #4887b0); }
.task svg { flex: none; width: 28px; height: 28px; }
.task.active { margin-left: 15px; background: linear-gradient(170deg, #cbdbe6, #8fb3ca 45%, #5b96bc); }
.pinned { margin-left: 15px; }
.pinned svg { width: 30px; height: 30px; }
.tray { margin-left: auto; display: flex; align-items: center; gap: 8px; height: 100%; }
.tray svg { width: 15px; height: 16px; }
.tray .lang { margin-right: 6px; padding-bottom: 4px; color: #d3e2ef; }
.tray time { text-align: center; line-height: 16px; margin: 0 5px 0 7px; }
.peek { width: 11px; height: 100%; border: 1px solid #6b92b8; background: linear-gradient(135deg, #183c68, #5c88b4); }
.cursor { position: absolute; left: 1112px; top: 137px; width: 14px; height: 20px; }
```
